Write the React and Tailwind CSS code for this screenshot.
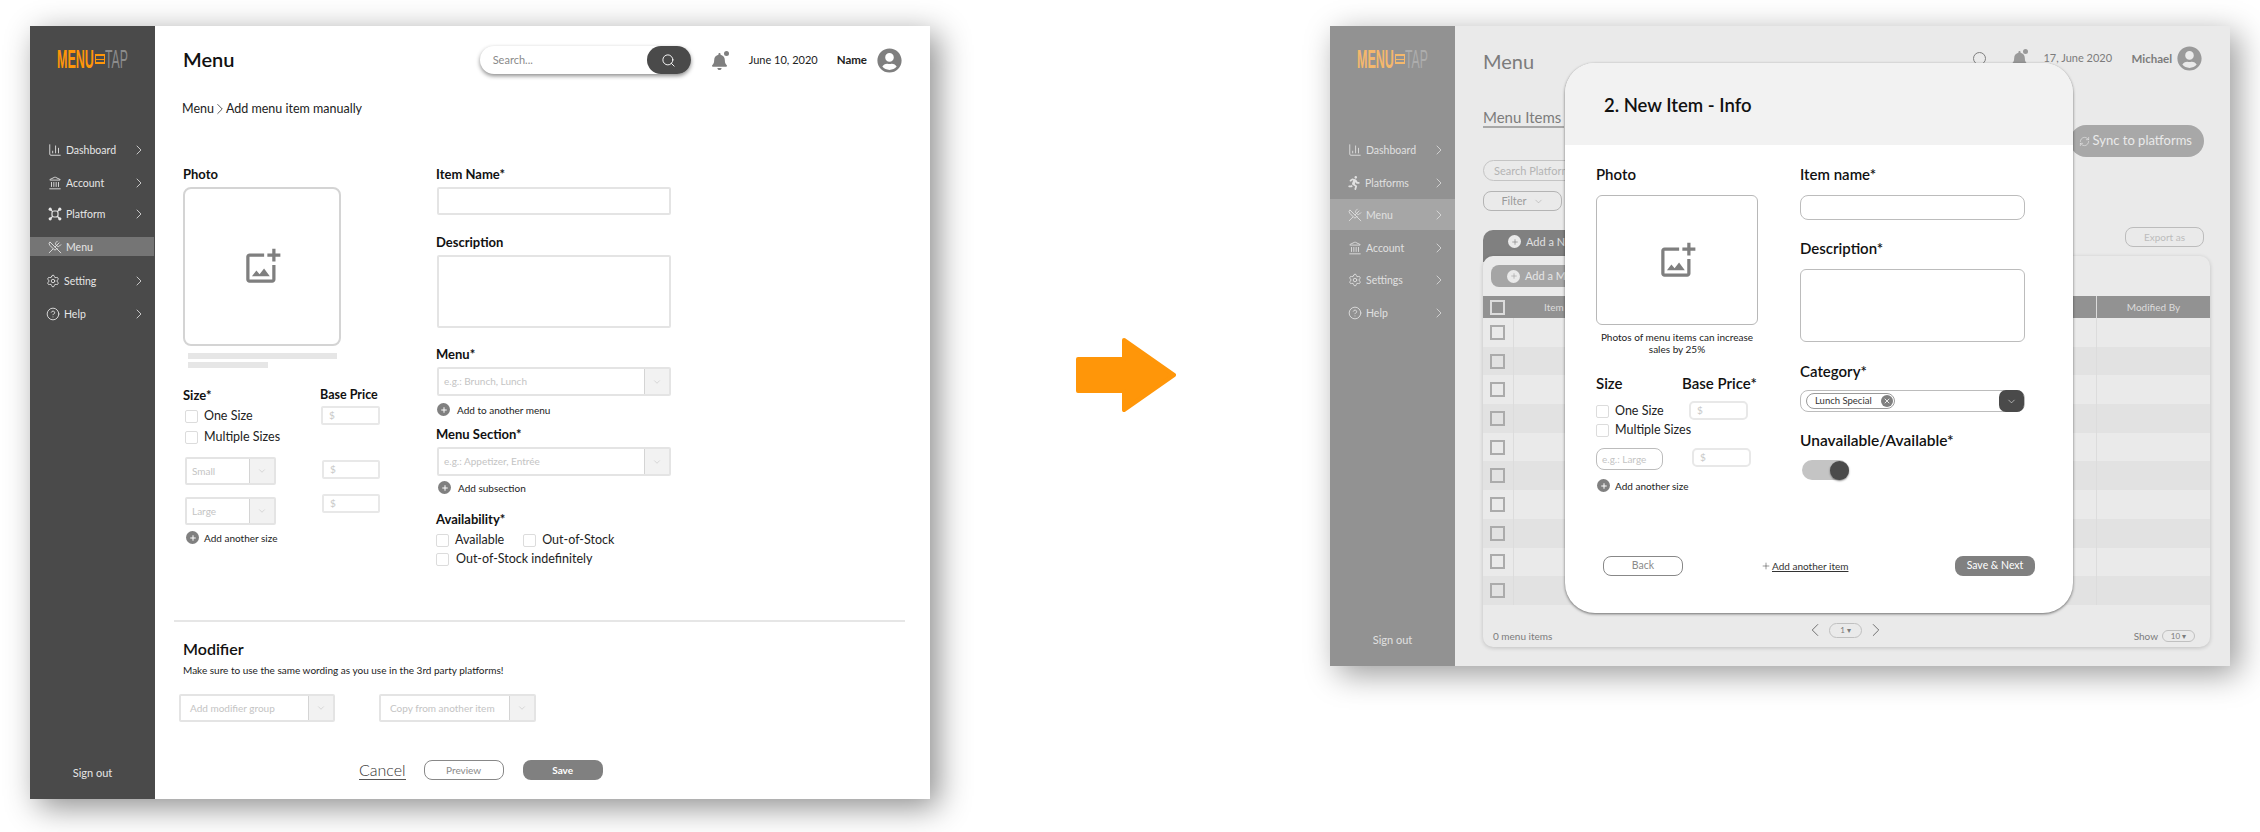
import { ChartColumn, ChevronDown, ChevronLeft, ChevronRight, CircleHelp, Landmark, Plus, RefreshCw, Search, Settings, UtensilsCrossed, X } from "lucide-react";
import { FaBell, FaRunning, FaUserCircle } from "react-icons/fa";
import { MdOutlineAddPhotoAlternate } from "react-icons/md";

function PlatformIcon({ size = 14, className }) {
  return (
    <svg viewBox="0 0 14 14" width={size} height={size} className={className} fill="none" stroke="currentColor">
      <rect x="4" y="4" width="6" height="6" rx="2" strokeWidth="1.2" />
      <path d="M2.5 2.5L4.6 4.6M11.5 2.5L9.4 4.6M2.5 11.5L4.6 9.4M11.5 11.5L9.4 9.4" strokeWidth="1.2" />
      <circle cx="2.2" cy="2.2" r="1.6" fill="currentColor" stroke="none" />
      <circle cx="11.8" cy="2.2" r="1.6" fill="currentColor" stroke="none" />
      <circle cx="2.2" cy="11.8" r="1.6" fill="currentColor" stroke="none" />
      <circle cx="11.8" cy="11.8" r="1.6" fill="currentColor" stroke="none" />
    </svg>
  );
}

function Logo({ menu, tap, bars }) {
  return (
    <div className="flex h-[18px] items-center pl-[27px]">
      <span className={`inline-block w-[38px] origin-left scale-x-[0.5] whitespace-nowrap font-['Liberation_Sans',sans-serif] text-[25px] leading-[18px] font-bold ${menu}`}>MENU</span>
      <span className={`flex h-[10px] w-[10px] flex-col justify-between border ${bars}`}>
        <span className="h-px bg-current" />
        <span className="h-px bg-current" />
        <span className="h-px bg-current" />
      </span>
      <span className={`inline-block w-[24px] origin-left scale-x-[0.49] whitespace-nowrap font-['Liberation_Sans',sans-serif] text-[25px] leading-[18px] ${tap}`}>TAP</span>
    </div>
  );
}

function NavItem({ icon: Icon, label, className, active, activeBg, chevron }) {
  return (
    <div className={`flex items-center ${className} ${active ? activeBg : ""}`}>
      <Icon size={14} strokeWidth={1.5} className="shrink-0" />
      <span className="ml-[4px] flex-1 text-[10.5px] leading-4">{label}</span>
      {chevron && <ChevronRight size={16} strokeWidth={1.2} className="mr-[8px]" />}
    </div>
  );
}

function Sidebar({ bg, text, items, logo, activeBg }) {
  return (
    <aside className={`flex h-full w-[125px] shrink-0 flex-col pt-[24px] ${bg} ${text}`}>
      <Logo {...logo} />
      {items.map((it) => (
        <NavItem key={it.label} {...it} activeBg={activeBg} />
      ))}
      <div className="mt-auto pb-[18px] text-center text-[11px] leading-4">Sign out</div>
    </aside>
  );
}

function Check({ label, className = "", labelClass = "ml-[6px]" }) {
  return (
    <div className={`flex h-[14px] items-center ${className}`}>
      <span className="h-[13px] w-[13px] shrink-0 rounded-[2px] border border-[#dcdcdc]" />
      <span className={`whitespace-nowrap text-[12.5px] leading-4 text-[#222] ${labelClass}`}>{label}</span>
    </div>
  );
}

function Select({ text, className, caret = "w-[25px]" }) {
  return (
    <div className={`flex rounded-[2px] border-2 border-[#e4e4e4] ${className}`}>
      <div className="flex-1 truncate pl-[5px] text-[10px] leading-[24px] text-[#c4c4c4]">{text}</div>
      <div className={`flex items-center justify-center border-l border-[#d4d4d4] bg-[#f2f2f2] ${caret}`}>
        <ChevronDown size={10} strokeWidth={1} className="text-[#b0b0b0]" />
      </div>
    </div>
  );
}

function Price({ className }) {
  return <div className={`h-[19px] rounded-[2px] border-2 border-[#e8e8e8] pl-[6px] text-[10px] leading-[15px] text-[#c8c8c8] ${className}`}>$</div>;
}

function AddRow({ label, className, gap = "ml-[7px]" }) {
  return (
    <div className={`flex h-[13px] items-center ${className}`}>
      <span className="flex h-[13px] w-[13px] shrink-0 items-center justify-center rounded-full bg-[#808080]">
        <Plus size={8} strokeWidth={3} className="text-white" />
      </span>
      <span className={`text-[10px] leading-4 whitespace-nowrap text-[#222] ${gap}`}>{label}</span>
    </div>
  );
}

function Label({ children, className = "", size = "text-[13px]" }) {
  return <div className={`h-[14px] leading-[14px] font-bold whitespace-nowrap text-[#111] ${size} ${className}`}>{children}</div>;
}

function MainFrame() {
  return (
    <main className="flex h-full flex-1 flex-col bg-white pt-[20px]">
      <header className="flex h-[28px] items-center pr-[28px] pl-[28px]">
        <h1 className="-mt-[2px] flex-1 text-[20px] font-semibold text-[#111]">Menu</h1>
        <div className="flex h-[28px] w-[211px] items-center rounded-full bg-white shadow-[0_2px_4px_rgba(0,0,0,0.45)]">
          <span className="flex-1 pl-[13px] text-[11px] text-[#8a8a8a]">Search...</span>
          <span className="flex h-[28px] w-[44px] items-center justify-center rounded-full bg-[#4a4a4a]">
            <Search size={15} strokeWidth={1.5} className="text-white" />
          </span>
        </div>
        <div className="relative ml-[20px] h-[19px] w-[18px]">
          <FaBell size={17} className="mt-[2px] text-[#7f7f7f]" />
          <span className="absolute top-0 right-0 h-[5px] w-[5px] rounded-full bg-[#7f7f7f]" />
        </div>
        <span className="ml-[20px] w-[68px] text-[11px] whitespace-nowrap text-[#222]">June 10, 2020</span>
        <span className="ml-[20px] text-[11.5px] font-bold text-[#222]">Name</span>
        <FaUserCircle size={25} className="ml-[10px] text-[#7f7f7f]" />
      </header>

      <div className="mt-[27px] flex h-4 items-center pl-[27px] text-[12.5px] text-[#222]">
        Menu
        <ChevronRight size={18} strokeWidth={1} className="-mx-[3px]" />
        Add menu item manually
      </div>

      <div className="mt-[50px] flex h-[453px] pl-[28px]">
        <div className="w-[253px]">
          <Label>Photo</Label>
          <div className="mt-[6px] flex h-[159px] w-[158px] items-center justify-center rounded-[8px] border-2 border-[#d4d4d4]">
            <MdOutlineAddPhotoAlternate size={39} className="text-[#7f7f7f]" />
          </div>
          <div className="mt-[7px] ml-[5px] h-[6px] w-[149px] bg-[#e6e6e6]" />
          <div className="mt-[3px] ml-[5px] h-[6px] w-[80px] bg-[#e6e6e6]" />
          <div className="mt-[20px] flex">
            <div className="w-[137px]">
              <Label>Size*</Label>
              <Check label="One Size" className="mt-[7px] ml-[2px]" />
              <Check label="Multiple Sizes" className="mt-[7px] ml-[2px]" />
              <Select text="Small" className="mt-[13px] ml-[2px] h-[28px] w-[91px]" />
              <Select text="Large" className="mt-[12px] ml-[2px] h-[28px] w-[91px]" />
              <AddRow label="Add another size" className="mt-[6px] ml-[3px]" gap="ml-[5px]" />
            </div>
            <div>
              <Label size="text-[12.5px]">Base Price</Label>
              <Price className="mt-[4px] ml-[1px] w-[59px]" />
              <Price className="mt-[35px] ml-[2px] w-[58px]" />
              <Price className="mt-[15px] ml-[2px] w-[58px]" />
            </div>
          </div>
        </div>

        <div className="w-[235px]">
          <Label>Item Name*</Label>
          <div className="mt-[6px] ml-px h-[28px] w-[234px] rounded-[2px] border-2 border-[#e4e4e4]" />
          <Label className="mt-[20px]">Description</Label>
          <div className="mt-[6px] ml-px h-[73px] w-[234px] rounded-[2px] border-2 border-[#e4e4e4]" />
          <Label className="mt-[19px]">Menu*</Label>
          <Select text="e.g.: Brunch, Lunch" className="mt-[6px] ml-px h-[29px] w-[234px]" />
          <AddRow label="Add to another menu" className="mt-[7px] ml-px" />
          <Label className="mt-[11px]">Menu Section*</Label>
          <Select text="e.g.: Appetizer, Entrée" className="mt-[6px] ml-px h-[29px] w-[234px]" />
          <AddRow label="Add subsection" className="mt-[5px] ml-[2px]" />
          <Label className="mt-[18px]">Availability*</Label>
          <div className="mt-[7px] flex">
            <Check label="Available" />
            <Check label="Out-of-Stock" className="ml-[19px]" />
          </div>
          <Check label="Out-of-Stock indefinitely" className="mt-[5px]" labelClass="ml-[7px]" />
        </div>
      </div>

      <div className="ml-[19px] h-[2px] w-[731px] bg-[#e6e6e6]" />
      <h2 className="mt-[18px] pl-[28px] text-[16px] leading-[18px] font-semibold text-[#111]">Modifier</h2>
      <p className="mt-[5px] pl-[28px] text-[10px] leading-[14px] text-[#222]">Make sure to use the same wording as you use in the 3rd party platforms!</p>
      <div className="mt-[17px] ml-[24px] flex gap-[44px]">
        <Select text="Add modifier group" className="h-[28px] w-[156px] pl-[4px]" />
        <Select text="Copy from another item" className="h-[28px] w-[157px] pl-[4px]" />
      </div>
      <div className="mt-[38px] ml-[204px] flex h-[20px] items-center">
        <span className="border-b border-[#555] text-[16px] leading-[18px] font-light text-[#333]">Cancel</span>
        <button className="ml-[18px] h-[20px] w-[80px] rounded-[8px] border border-[#888] text-[10px] text-[#8a8a8a]">Preview</button>
        <button className="ml-[19px] h-[20px] w-[80px] rounded-[8px] bg-[#808080] text-[10px] font-bold text-white">Save</button>
      </div>
    </main>
  );
}

function TableRow({ odd }) {
  return (
    <div className={`flex h-[28.7px] ${odd ? "bg-[#e2e2e2]" : ""}`}>
      <div className="flex w-[31px] items-center border-r border-[#dcdcdc] pl-[7px]">
        <span className="h-[15px] w-[15px] border-2 border-[#ababab]" />
      </div>
      <div className="flex-1" />
      <div className="w-[114px] border-l border-[#dcdcdc]" />
    </div>
  );
}

function ModalForm() {
  return (
    <div className="absolute top-[37px] left-[235px] flex h-[550px] w-[508px] flex-col overflow-hidden rounded-[30px] bg-white shadow-[0_1px_3px_rgba(0,0,0,0.55)]">
      <div className="flex h-[82px] items-center bg-[#f2f2f2] pt-[4px] pl-[39px] text-[18.5px] font-semibold text-[#111]">2. New Item - Info</div>
      <div className="flex flex-1 flex-col pt-[20px]">
        <div className="flex pl-[31px]">
          <div className="w-[204px]">
            <div className="h-[18px] text-[15px] leading-[18px] font-semibold text-[#111]">Photo</div>
            <div className="mt-[12px] flex h-[130px] w-[162px] items-center justify-center rounded-[6px] border border-[#b8b8b8]">
              <MdOutlineAddPhotoAlternate size={39} className="text-[#7f7f7f]" />
            </div>
            <p className="mt-[6px] w-[162px] text-center text-[10px] leading-[12px] text-[#222]">Photos of menu items can increase sales by 25%</p>
            <div className="mt-[19px] flex">
              <div className="w-[86px]">
                <div className="h-[18px] text-[15px] leading-[18px] font-semibold text-[#111]">Size</div>
                <Check label="One Size" className="mt-[12px]" labelClass="ml-[6px]" />
                <Check label="Multiple Sizes" className="mt-[5px]" labelClass="ml-[6px]" />
                <div className="mt-[11px] h-[22px] w-[67px] rounded-[8px] border border-[#bcbcbc] pl-[5px] text-[10px] leading-[20px] text-[#c4c4c4]">e.g.: Large</div>
                <AddRow label="Add another size" className="mt-[9px] ml-px" gap="ml-[5px]" />
              </div>
              <div>
                <div className="h-[18px] text-[15px] leading-[18px] font-semibold whitespace-nowrap text-[#111]">Base Price*</div>
                <Price className="mt-[9px] ml-[7px] w-[59px] rounded-[5px] border" />
                <Price className="mt-[28px] ml-[10px] w-[59px] rounded-[5px] border" />
              </div>
            </div>
          </div>
          <div>
            <div className="h-[18px] text-[15px] leading-[18px] font-semibold text-[#111]">Item name*</div>
            <div className="mt-[12px] h-[25px] w-[225px] rounded-[8px] border border-[#bcbcbc]" />
            <div className="mt-[19px] h-[18px] text-[15px] leading-[18px] font-semibold text-[#111]">Description*</div>
            <div className="mt-[12px] h-[73px] w-[225px] rounded-[6px] border border-[#bcbcbc]" />
            <div className="mt-[20px] h-[18px] text-[15px] leading-[18px] font-semibold text-[#111]">Category*</div>
            <div className="mt-[10px] flex h-[22px] w-[225px] items-center rounded-[8px] border border-[#bcbcbc] pl-[5px]">
              <span className="flex h-[16px] w-[89px] items-center justify-between rounded-full border border-[#9a9a9a] pr-px pl-[8px] text-[9.5px] whitespace-nowrap text-[#333]">
                Lunch Special
                <span className="flex h-[12px] w-[12px] items-center justify-center rounded-full bg-[#808080]">
                  <X size={8} strokeWidth={2.5} className="text-white" />
                </span>
              </span>
              <span className="ml-auto flex h-[22px] w-[25px] items-center justify-center rounded-[7px] bg-[#4a4a4a]">
                <ChevronDown size={11} strokeWidth={1.2} className="text-white" />
              </span>
            </div>
            <div className="mt-[19px] h-[18px] text-[15.5px] leading-[18px] font-semibold whitespace-nowrap text-[#111]">Unavailable/Available*</div>
            <div className="mt-[11px] ml-[2px] flex h-[20px] w-[47px] items-center justify-end rounded-full bg-[#c4c4c4]">
              <span className="h-[19px] w-[19px] rounded-full bg-[#4a4a4a] shadow-[0_1px_2px_rgba(0,0,0,0.5)]" />
            </div>
          </div>
        </div>
        <div className="mt-auto mb-[37px] flex items-center pr-[38px] pl-[38px]">
          <button className="h-[20px] w-[80px] rounded-[8px] border border-[#888] text-[10.5px] text-[#8a8a8a]">Back</button>
          <span className="ml-[78px] flex items-center text-[10px] text-[#333]">
            <Plus size={10} strokeWidth={1.2} className="mr-px" />
            <span className="underline">Add another item</span>
          </span>
          <button className="ml-auto h-[20px] w-[80px] rounded-[8px] bg-[#808080] text-[10.5px] text-white">Save &amp; Next</button>
        </div>
      </div>
    </div>
  );
}

function DimmedFrame() {
  return (
    <main className="flex h-full flex-1 flex-col bg-[#eaeaea] pt-[20px] pr-[20px] pl-[28px]">
      <header className="flex h-[25px] items-center pr-[8px]">
        <h1 className="flex-1 pt-[5px] text-[20px] text-[#7c7c7c]">Menu</h1>
        <span className="h-[13px] w-[13px] rounded-full border-[1.5px] border-[#7f7f7f]" />
        <div className="relative ml-[25px] h-[19px] w-[17px]">
          <FaBell size={17} className="mt-[2px] text-[#9a9a9a]" />
          <span className="absolute top-0 right-0 h-[5px] w-[5px] rounded-full bg-[#9a9a9a]" />
        </div>
        <span className="ml-[15px] w-[68px] text-[11px] whitespace-nowrap text-[#7c7c7c]">17, June 2020</span>
        <span className="ml-[20px] text-[11.5px] font-bold text-[#7c7c7c]">Michael</span>
        <FaUserCircle size={25} className="ml-[5px] text-[#9a9a9a]" />
      </header>

      <div className="mt-[39px] flex h-[47px] justify-between pr-[6px]">
        <div className="h-[18px] w-[81px] border-b-2 border-[#a8a8a8] text-[15px] leading-[14px] whitespace-nowrap text-[#7c7c7c]">Menu Items</div>
        <div className="mt-[15px] flex h-[32px] w-[134px] items-center justify-end rounded-full bg-[#a8a8a8] pr-[12px] text-[13px] text-[#eaeaea]">
          <RefreshCw size={11} strokeWidth={1.3} className="mr-[3px]" />
          Sync to platforms
        </div>
      </div>

      <div className="mt-[3px] h-[21px] w-[240px] rounded-full border border-[#c4c4c4] pl-[10px] text-[11px] leading-[19px] text-[#b4b4b4]">Search Platforms</div>
      <div className="mt-[10px] flex h-[20px] w-[79px] items-center justify-center rounded-[8px] border border-[#b4b4b4] text-[11px] text-[#9a9a9a]">
        Filter
        <ChevronDown size={11} strokeWidth={1} className="ml-[6px]" />
      </div>

      <div className="mt-[16px] flex h-[29px] justify-between pr-[6px]">
        <div className="mt-[3px] flex h-[32px] w-[300px] rounded-t-[10px] bg-[#808080] pt-[5px] pl-[25px] text-[11px] text-[#e0e0e0]">
          <span className="flex h-[13px] w-[13px] items-center justify-center rounded-full bg-[#eaeaea]">
            <Plus size={8} strokeWidth={2} className="text-[#808080]" />
          </span>
          <span className="ml-[5px] leading-[14px]">Add a New Menu</span>
        </div>
        <button className="h-[20px] w-[79px] rounded-[8px] border border-[#bcbcbc] text-[10px] text-[#bcbcbc]">Export as</button>
      </div>

      <section className="relative h-[391px] rounded-[10px] bg-[#eaeaea] pt-[9px] shadow-[0_1px_4px_rgba(0,0,0,0.18)]">
        <div className="ml-[8px] flex h-[22px] w-[200px] items-center rounded-[8px] bg-[#a5a5a5] pl-[16px] text-[11px] text-[#e6e6e6]">
          <span className="flex h-[13px] w-[13px] items-center justify-center rounded-full bg-[#eaeaea]">
            <Plus size={8} strokeWidth={2} className="text-[#a5a5a5]" />
          </span>
          <span className="ml-[5px]">Add a Menu</span>
        </div>
        <div className="mt-[9px] flex h-[22px] items-center bg-[#929292] text-[10px] text-[#dcdcdc]">
          <div className="flex w-[31px] pl-[7px]">
            <span className="h-[15px] w-[15px] border-2 border-[#dcdcdc]" />
          </div>
          <span className="ml-[30px] flex-1">Item</span>
          <div className="flex h-full w-[114px] items-center justify-center border-l border-[#dcdcdc]">Modified By</div>
        </div>
        {[0, 1, 2, 3, 4, 5, 6, 7, 8, 9].map((i) => (
          <TableRow key={i} odd={i % 2 === 1} />
        ))}
        <div className="flex">
          <span className="w-[321px] pt-[24px] pl-[10px] text-[10px] leading-[14px] text-[#7c7c7c]">0 menu items</span>
          <div className="flex items-center pt-[12px]">
            <ChevronLeft size={22} strokeWidth={1} className="text-[#666]" />
            <span className="ml-[3px] flex h-[15px] w-[33px] items-center justify-center rounded-full border border-[#c0c0c0] text-[8px] text-[#7c7c7c]">1 ▾</span>
            <ChevronRight size={22} strokeWidth={1} className="ml-[3px] text-[#666]" />
          </div>
          <div className="ml-auto flex items-center pt-[24px] pr-[15px] text-[10px] text-[#7c7c7c]">
            Show
            <span className="ml-[4px] flex h-[12px] w-[33px] items-center justify-center rounded-full border border-[#c0c0c0] text-[8px]">10 ▾</span>
          </div>
        </div>
      </section>
    </main>
  );
}

const leftNav = [
  { icon: ChartColumn, label: "Dashboard", className: "mt-[72px] h-[20px] pl-[18px]", chevron: true },
  { icon: Landmark, label: "Account", className: "mt-[13px] h-[20px] pl-[18px]", chevron: true },
  { icon: PlatformIcon, label: "Platform", className: "mt-[11px] h-[20px] pl-[18px]", chevron: true },
  { icon: UtensilsCrossed, label: "Menu", className: "mt-[13px] h-[19px] w-[124px] pl-[18px]", active: true },
  { icon: Settings, label: "Setting", className: "mt-[15px] h-[20px] pl-[16px]", chevron: true },
  { icon: CircleHelp, label: "Help", className: "mt-[13px] h-[20px] pl-[16px]", chevron: true },
];

const rightNav = [
  { icon: ChartColumn, label: "Dashboard", className: "mt-[72px] h-[20px] pl-[18px]", chevron: true },
  { icon: FaRunning, label: "Platforms", className: "mt-[13px] h-[20px] pl-[17px]", chevron: true },
  { icon: UtensilsCrossed, label: "Menu", className: "mt-[6px] h-[31px] pl-[18px]", active: true, chevron: true },
  { icon: Landmark, label: "Account", className: "mt-[8px] h-[20px] pl-[18px]", chevron: true },
  { icon: Settings, label: "Settings", className: "mt-[12px] h-[20px] pl-[18px]", chevron: true },
  { icon: CircleHelp, label: "Help", className: "mt-[13px] h-[20px] pl-[18px]", chevron: true },
];

export default function App() {
  return (
    <div className="flex h-[832px] w-[2260px] overflow-hidden bg-white pt-[26px] pl-[30px] font-['Lato',sans-serif]">
      <div className="flex h-[773px] w-[900px] shrink-0 shadow-[8px_8px_30px_rgba(0,0,0,0.45)]">
        <Sidebar bg="bg-[#4a4a4a]" text="text-[#e6e6e6]" items={leftNav} activeBg="bg-[#757575]" logo={{ menu: "text-[#ff9609]", tap: "text-[#8c8c8c]", bars: "border-[#ff9609] text-[#ff9609]" }} />
        <MainFrame />
      </div>

      <svg viewBox="0 0 100 74" className="mt-[312px] ml-[146px] h-[74px] w-[100px] shrink-0" fill="#ff9609" stroke="#ff9609" strokeWidth="4" strokeLinejoin="round">
        <path d="M2 21H48V2L98 37L48 72V53H2Z" />
      </svg>

      <div className="relative ml-[154px] flex h-[640px] w-[900px] shrink-0 shadow-[8px_8px_30px_rgba(0,0,0,0.4)]">
        <Sidebar bg="bg-[#929292]" text="text-[#e0e0e0]" items={rightNav} activeBg="bg-[#a6a6a6]" logo={{ menu: "text-[#f5b86c]", tap: "text-[#adadad]", bars: "border-[#f5b86c] text-[#f5b86c]" }} />
        <DimmedFrame />
        <ModalForm />
      </div>
    </div>
  );
}
